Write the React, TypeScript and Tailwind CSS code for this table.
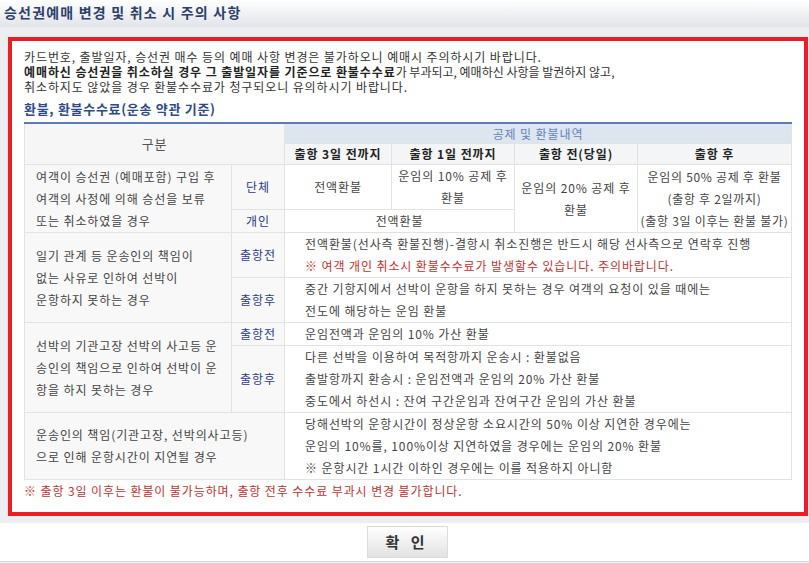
import React from "react";

const leftCell = "border border-[#e2e2e2] bg-[#f8f8f8] px-[11px] text-left align-middle whitespace-nowrap";
const subCell = "border border-[#e2e2e2] bg-[#f8f8f8] text-center align-middle text-[#2b3a8c] whitespace-nowrap";
const bodyCell = "border border-[#e2e2e2] bg-white text-center align-middle whitespace-nowrap";
const wideCell = "border border-[#e2e2e2] bg-white pl-5 text-left align-middle whitespace-nowrap";

const RefundTable: React.FC = () => {
  return (
    <table className="w-full table-fixed border-collapse border-t-2 border-t-[#5a7bb8] text-[12px] leading-[22px] tracking-[0.9px] text-[#444]">
      <colgroup>
        <col className="w-[207px]" />
        <col className="w-[53px]" />
        <col className="w-[107px]" />
        <col className="w-[123px]" />
        <col className="w-[123px]" />
        <col />
      </colgroup>
      <thead>
        <tr className="h-[20px]">
          <th
            colSpan={2}
            rowSpan={2}
            className="border border-[#e2e2e2] bg-[#f6f6f6] text-[13px] font-normal text-[#555]"
          >
            구분
          </th>
          <th
            colSpan={4}
            className="border border-[#e2e2e2] bg-[#dde5ef] text-[12px] leading-[19px] font-normal text-[#6483bb]"
          >
            공제 및 환불내역
          </th>
        </tr>
        <tr className="h-[21px]">
          <th className="border border-[#e2e2e2] bg-[#f4f5f6] leading-[20px] font-bold text-[#222]">출항 3일 전까지</th>
          <th className="border border-[#e2e2e2] bg-[#f4f5f6] leading-[20px] font-bold text-[#222]">출항 1일 전까지</th>
          <th className="border border-[#e2e2e2] bg-[#f4f5f6] leading-[20px] font-bold text-[#222]">출항 전(당일)</th>
          <th className="border border-[#e2e2e2] bg-[#f4f5f6] leading-[20px] font-bold text-[#222]">출항 후</th>
        </tr>
      </thead>
      <tbody>
        <tr>
          <td rowSpan={2} className={leftCell}>
            여객이 승선권 (예매포함) 구입 후
            <br />
            여객의 사정에 의해 승선을 보류
            <br />
            또는 취소하였을 경우
          </td>
          <td className={subCell}>단체</td>
          <td className={bodyCell}>전액환불</td>
          <td className={bodyCell}>
            운임의 10% 공제 후
            <br />
            환불
          </td>
          <td rowSpan={2} className={bodyCell}>
            운임의 20% 공제 후
            <br />
            환불
          </td>
          <td rowSpan={2} className={`${bodyCell} tracking-[0.7px]`}>
            운임의 50% 공제 후 환불
            <br />
            (출항 후 2일까지)
            <br />
            (출항 3일 이후는 환불 불가)
          </td>
        </tr>
        <tr>
          <td className={subCell}>개인</td>
          <td colSpan={2} className={bodyCell}>
            전액환불
          </td>
        </tr>

        <tr>
          <td rowSpan={2} className={leftCell}>
            일기 관계 등 운송인의 책임이
            <br />
            없는 사유로 인하여 선박이
            <br />
            운항하지 못하는 경우
          </td>
          <td className={subCell}>출항전</td>
          <td colSpan={4} className={wideCell}>
            전액환불(선사측 환불진행)-결항시 취소진행은 반드시 해당 선사측으로 연락후 진행
            <br />
            <span className="text-[#c4302f]">※ 여객 개인 취소시 환불수수료가 발생할수 있습니다. 주의바랍니다.</span>
          </td>
        </tr>
        <tr>
          <td className={subCell}>출항후</td>
          <td colSpan={4} className={wideCell}>
            중간 기항지에서 선박이 운항을 하지 못하는 경우 여객의 요청이 있을 때에는
            <br />
            전도에 해당하는 운임 환불
          </td>
        </tr>

        <tr>
          <td rowSpan={2} className={leftCell}>
            선박의 기관고장 선박의 사고등 운
            <br />
            송인의 책임으로 인하여 선박이 운
            <br />
            항을 하지 못하는 경우
          </td>
          <td className={subCell}>출항전</td>
          <td colSpan={4} className={wideCell}>
            운임전액과 운임의 10% 가산 환불
          </td>
        </tr>
        <tr>
          <td className={subCell}>출항후</td>
          <td colSpan={4} className={wideCell}>
            다른 선박을 이용하여 목적항까지 운송시 : 환불없음
            <br />
            출발항까지 환송시 : 운임전액과 운임의 20% 가산 환불
            <br />
            중도에서 하선시 : 잔여 구간운임과 잔여구간 운임의 가산 환불
          </td>
        </tr>

        <tr>
          <td colSpan={2} className={leftCell}>
            운송인의 책임(기관고장, 선박의사고등)
            <br />
            으로 인해 운항시간이 지연될 경우
          </td>
          <td colSpan={4} className={wideCell}>
            당해선박의 운항시간이 정상운항 소요시간의 50% 이상 지연한 경우에는
            <br />
            운임의 10%를, 100%이상 지연하였을 경우에는 운임의 20% 환불
            <br />
            ※ 운항시간 1시간 이하인 경우에는 이를 적용하지 아니함
          </td>
        </tr>
      </tbody>
    </table>
  );
};

export default function App() {
  return (
    <div className="w-[809px] h-[563px] overflow-hidden bg-[#eceef1] font-['Noto_Sans_CJK_KR',sans-serif]">
      <div className="h-[27px] bg-gradient-to-b from-[#ffffff] to-[#e1e4e9] pl-[4px] text-[14px] leading-[24px] font-bold tracking-[1.2px] text-[#2c3f6d]">
        승선권예매 변경 및 취소 시 주의 사항
      </div>

      <div className="pt-[10px] pb-[7px] pl-2">
        <div className="w-[800px] border-4 border-[#ee1c25] bg-white px-3 pt-[8px] pb-[12px]">
          <p className="text-[12px] leading-[15px] tracking-[0.9px] text-[#333]">
            카드번호, 출발일자, 승선권 매수 등의 예매 사항 변경은 불가하오니 예매시 주의하시기 바랍니다.
            <br />
            <b className="text-[#222]">예매하신 승선권을 취소하실 경우 그 출발일자를 기준으로 환불수수료</b>
            <span className="tracking-normal">가 부과되고, 예매하신 사항을 발권하지 않고,</span>
            <br />
            취소하지도 않았을 경우 환불수수료가 청구되오니 유의하시기 바랍니다.
          </p>

          <h3 className="mt-[6px] mb-[4px] text-[13px] leading-[18px] font-bold tracking-[0.7px] text-[#2d4a8a]">
            환불, 환불수수료(운송 약관 기준)
          </h3>

          <RefundTable />

          <p className="mt-[1px] text-[12px] leading-[19px] tracking-[0.9px] text-[#c4302f]">
            ※ 출항 3일 이후는 환불이 불가능하며, 출항 전후 수수료 부과시 변경 불가합니다.
          </p>
        </div>
      </div>

      <div className="flex h-[39px] items-center justify-center border-b border-[#d8dadd] bg-white">
        <button className="ml-[5px] h-[32px] w-[81px] border border-[#dcdcdc] bg-gradient-to-b from-[#ffffff] to-[#e2e2e2] text-[15px] font-bold tracking-[4px] text-[#333]">
          확 인
        </button>
      </div>
    </div>
  );
}
